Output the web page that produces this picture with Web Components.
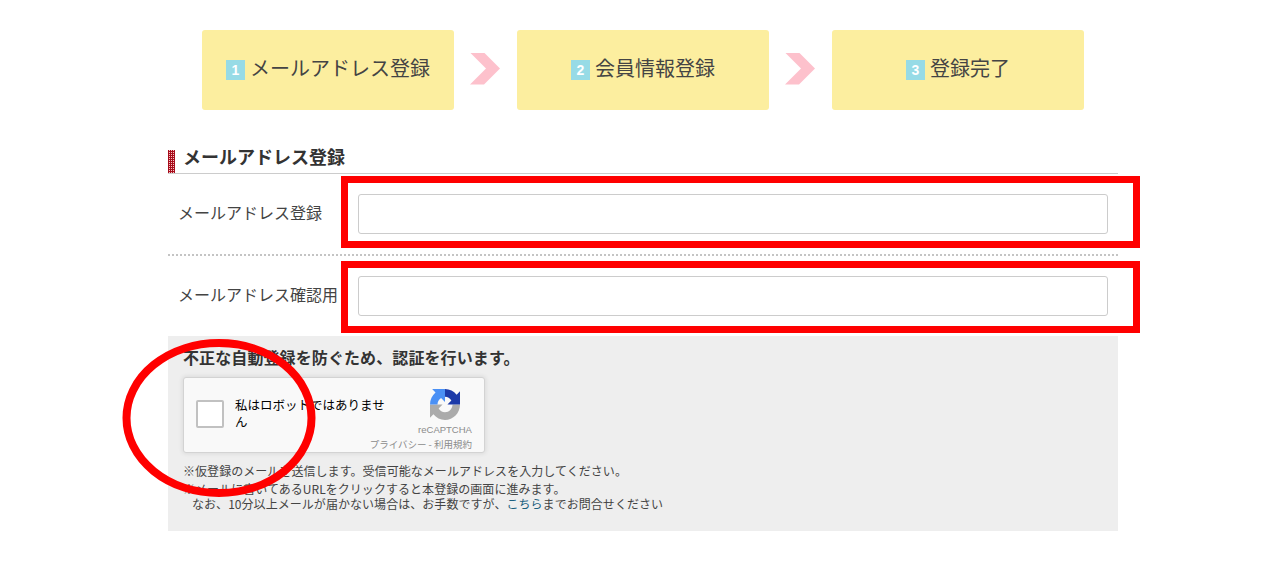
<!DOCTYPE html>
<html lang="ja">
<head>
<meta charset="utf-8">
<title>メールアドレス登録</title>
<style>
  html, body { margin: 0; background: #fff; }
  body { font-family: "Noto Sans CJK JP", "Noto Sans", sans-serif; color: #333; }
</style>
</head>
<body>
<reg-page>
  <step-bar>
    <step-item num="1">メールアドレス登録</step-item>
    <step-item num="2">会員情報登録</step-item>
    <step-item num="3">登録完了</step-item>
  </step-bar>
  <section-title>メールアドレス登録</section-title>
  <form-row label="メールアドレス登録" dotted></form-row>
  <form-row label="メールアドレス確認用"></form-row>
  <captcha-panel>
    <span slot="title">不正な自動登録を防ぐため、認証を行います。</span>
    <recaptcha-box></recaptcha-box>
    <p slot="note">※仮登録のメールを送信します。受信可能なメールアドレスを入力してください。</p>
    <p slot="note">※メールに書いてあるURLをクリックすると本登録の画面に進みます。</p>
    <p slot="note" style="padding-left:9px">なお、10分以上メールが届かない場合は、お手数ですが、<a href="#" style="color:#1b6080;text-decoration:none">こちら</a>までお問合せください</p>
  </captcha-panel>
  <mark-up></mark-up>
</reg-page>

<script>
const define = (name, css, html, setup) => {
  customElements.define(name, class extends HTMLElement {
    constructor() {
      super()
      this.attachShadow({ mode: 'open' }).innerHTML = `<style>${css}</style>${html}`
    }
    connectedCallback() {
      if (setup) setup(this, this.shadowRoot)
    }
  })
}

define('reg-page', `
  :host { display: block; position: relative; width: 950px; margin: 0 auto; }
`, `<slot></slot>`)

define('step-bar', `
  :host { display: flex; justify-content: center; padding-top: 30px; }
`, `<slot></slot>`)

define('step-item', `
  :host { display: flex; align-items: center; }
  :host(:not(:last-child))::after {
    content: ""; width: 30px; height: 32px; margin: 0 17px 3px 16px;
    background: #fdc1cc;
    clip-path: polygon(0 0, 14px 0, 100% 50%, 14px 100%, 0 100%, 16px 50%);
  }
  .box {
    width: 252px; height: 80px; box-sizing: border-box; display: flex; align-items: center; justify-content: center; gap: 5px;
    background: #fcee9f; border-radius: 3px; font-size: 20px; color: #444; line-height: 1;
  }
  .label { margin-bottom: 4px; }
  .num {
    width: 19px; height: 20px; display: flex; align-items: center; justify-content: center;
    background: #97dbe6; color: #fff; font-size: 14px; font-family: "Liberation Sans", sans-serif; font-weight: bold;
  }
`, `<div class="box"><span class="num"></span><span class="label"><slot></slot></span></div>`, (el, root) => {
  root.querySelector('.num').textContent = el.getAttribute('num')
})

define('section-title', `
  :host {
    display: flex; align-items: center; margin-top: 38px; height: 26px; box-sizing: border-box;
    border-bottom: 1px solid #ccc; font-size: 18px; font-weight: bold; color: #333; line-height: 1;
  }
  i {
    width: 7px; height: 23px; margin: 2px 8px 0 0; align-self: flex-end;
    background: conic-gradient(#f3c4c4 25%, #a80d1c 0) 0 0 / 2px 2px;
  }
  span { margin-bottom: 10px; }
`, `<i></i><span><slot></slot></span>`)

define('form-row', `
  :host { display: flex; align-items: center; padding: 20px 10px; height: 40px; }
  :host([dotted]) { border-bottom: 2px dotted #c4c4c4; }
  label { width: 180px; margin-bottom: 4px; font-size: 16px; color: #444; line-height: 1; white-space: nowrap; }
  input {
    width: 750px; height: 40px; box-sizing: border-box; margin: 0; padding: 0 8px;
    border: 1px solid #ccc; border-radius: 3px; background: #fff; outline: none;
  }
`, `<label></label><input type="text">`, (el, root) => {
  root.querySelector('label').textContent = el.getAttribute('label')
})

define('captcha-panel', `
  :host { display: block; height: 195px; box-sizing: border-box; padding: 11px 15px 0; background: #eee; }
  .title { font-size: 16px; font-weight: bold; color: #333; line-height: 20px; margin-bottom: 10px; letter-spacing: .1px; }
  .notes { margin-top: 10px; font-size: 12px; color: #444; letter-spacing: .05px; }
  ::slotted(p) { margin: 0; line-height: 15px; }
  ::slotted(p:nth-of-type(1)) { margin-bottom: 3px; }
`, `<div class="title"><slot name="title"></slot></div><slot></slot><div class="notes"><slot name="note"></slot></div>`)

define('recaptcha-box', `
  :host {
    display: flex; position: relative; width: 302px; height: 76px; box-sizing: border-box;
    background: #f9f9f9; border: 1px solid #d3d3d3; border-radius: 3px; box-shadow: 0 0 4px 1px rgba(0,0,0,.08);
    font-family: "Noto Sans CJK JP", sans-serif;
  }
  .check { width: 28px; height: 28px; box-sizing: border-box; margin: 22px 0 0 12px; flex: none; background: #fff; border: 2px solid #c1c1c1; border-radius: 2px; }
  .text { width: 155px; margin: 18px 0 0 11px; font-size: 12.5px; line-height: 17px; color: #000; }
  .brand { position: absolute; right: 11px; top: 11px; width: 56px; display: flex; flex-direction: column; align-items: center; }
  svg { width: 30px; height: 31px; display: block; }
  .re { margin-top: 4px; font: 9.5px/12px "Liberation Sans", sans-serif; color: #8b8b8b; white-space: nowrap; }
  .links { position: absolute; right: 12px; bottom: 1px; font-size: 9.5px; line-height: 13px; color: #8b8b8b; white-space: nowrap; }
`, `<div class="check"></div>
<div class="text">私はロボットではありません</div>
<div class="brand">
  <svg viewBox="0 0 32 32" preserveAspectRatio="none">
    <path fill="#ababab" d="M0 16V29.700L3.600 26.100C6.600 29.700 11 32 16 32C24.800 32 32 24.800 32 16H24C24 20.400 20.400 24 16 24C13.100 24 10.600 22.500 9.200 20.200L13.400 16Z"/>
    <path fill="#4a90f5" d="M16 0H2.300L5.900 3.600C2.300 6.600 0 11 0 16H8C8 13.100 9.500 10.600 11.800 9.200L16 13.400Z"/>
    <path fill="#1c3aa9" d="M32 16V2.300L28.400 5.900C25.400 2.300 21 0 16 0V8C18.900 8 21.400 9.500 22.800 11.800L18.600 16Z"/>
  </svg>
  <div class="re">reCAPTCHA</div>
</div>
<div class="links">プライバシー - 利用規約</div>`)

define('mark-up', `
  :host { position: absolute; inset: 0; pointer-events: none; }
  .rect { position: absolute; left: 173px; width: 799px; height: 72px; box-sizing: border-box; border: 7px solid #f00; }
  .a { top: 176px; }
  .b { top: 261px; }
  svg { position: absolute; left: -46px; top: 339px; width: 194px; height: 158px; overflow: visible; }
`, `<div class="rect a"></div><div class="rect b"></div>
<svg viewBox="0 0 194 158"><ellipse cx="97" cy="79" rx="92.500" ry="75" fill="none" stroke="#f00" stroke-width="8"/></svg>`)
</script>
</body>
</html>
